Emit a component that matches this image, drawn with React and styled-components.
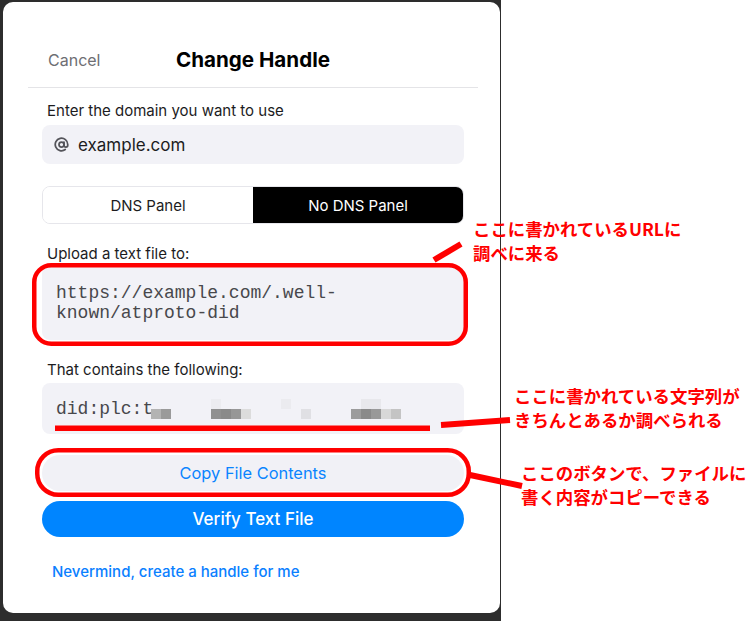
import React from 'react';
import styled, { createGlobalStyle } from 'styled-components';

const GlobalStyle = createGlobalStyle`
  html, body {
    margin: 0;
    padding: 0;
    background: #ffffff;
  }
  body {
    font-family: Inter, "Noto Sans", "Liberation Sans", sans-serif;
    -webkit-font-smoothing: antialiased;
  }
`;

const Page = styled.div`
  position: relative;
  width: 752px;
  height: 621px;
  display: flex;
  background: #ffffff;
  overflow: hidden;
`;

const Backdrop = styled.div`
  width: 501px;
  height: 621px;
  box-sizing: border-box;
  padding: 2px 0 8px 3px;
  background: #2d2d2d;
  overflow: hidden;
`;

const Modal = styled.div`
  width: 497px;
  height: 611px;
  box-sizing: border-box;
  background: #ffffff;
  border-radius: 10px;
  display: flex;
  flex-direction: column;
`;

const Header = styled.div`
  display: grid;
  grid-template-columns: 1fr auto 1fr;
  align-items: center;
  margin: 0 22px 0 25px;
  padding: 44px 0 13px;
  border-bottom: 1px solid #e4e4e7;
`;

const Cancel = styled.span`
  padding-left: 20px;
  font-size: 16px;
  line-height: 28px;
  color: #6e6e73;
`;

const Title = styled.h1`
  margin: 0;
  font-size: 20.6px;
  line-height: 28px;
  font-weight: 700;
  color: #000000;
`;

const Body = styled.div`
  display: flex;
  flex-direction: column;
  padding: 14px 36px 0 39px;
`;

const Label = styled.div`
  margin: ${p => p.$top || 0}px 0 ${p => p.$bottom || 4}px 5px;
  font-size: 15px;
  line-height: 18px;
  color: #1c1c1e;
`;

const InputBox = styled.div`
  height: 39px;
  display: flex;
  align-items: center;
  gap: 9px;
  padding: 0 12px;
  border-radius: 8px;
  background: #f2f2f7;
  color: #54545a;
`;

const InputText = styled.span`
  font-size: 17px;
  color: #1c1c1e;
`;

const Segmented = styled.div`
  margin-top: 22px;
  height: 38px;
  display: grid;
  grid-template-columns: 1fr 1fr;
  border: 1px solid #e6e6eb;
  border-radius: 8px;
  overflow: hidden;
  box-sizing: border-box;
`;

const Segment = styled.div`
  display: flex;
  align-items: center;
  justify-content: center;
  font-size: 15px;
  background: ${p => (p.$active ? '#000000' : '#ffffff')};
  color: ${p => (p.$active ? '#ffffff' : '#1c1c1e')};
`;

const CodeBox = styled.div`
  padding: ${p => (p.$tall ? '17px 14px 17px' : '16px 14px 15px')};
  border-radius: 8px;
  background: #f2f2f7;
  font-family: "Liberation Mono", "Courier New", monospace;
  font-size: 18px;
  line-height: 20px;
  color: #48484c;
  white-space: pre-wrap;
`;

const Mosaic = styled.svg`
  display: inline-block;
  vertical-align: -5px;
  margin-left: -2px;
`;

const PillButton = styled.button`
  height: 36px;
  margin-top: ${p => p.$top}px;
  border: none;
  border-radius: 18px;
  font-family: inherit;
  font-size: ${p => (p.$primary ? '17px' : '16.4px')};
  font-weight: ${p => (p.$primary ? 500 : 400)};
  background: ${p => (p.$primary ? '#0085ff' : '#f1f1f6')};
  color: ${p => (p.$primary ? '#ffffff' : '#0a84ff')};
`;

const TextLink = styled.a`
  margin: 26px 0 0 10px;
  font-size: 15px;
  line-height: 18px;
  font-weight: 500;
  color: #0a80ff;
  text-decoration: none;
`;

const Markup = styled.svg`
  position: absolute;
  left: 0;
  top: 0;
  pointer-events: none;
`;

const Note = styled.div`
  position: absolute;
  left: ${p => p.$x}px;
  top: ${p => p.$y}px;
  font-family: "Noto Sans CJK JP", sans-serif;
  font-size: 17.4px;
  font-weight: 700;
  line-height: 24px;
  color: #ff0000;
  white-space: nowrap;
`;

const AtIcon = () => (
  <svg width="15" height="15" viewBox="0 0 24 24" fill="none" stroke="currentColor" strokeWidth="2.8" strokeLinecap="round" strokeLinejoin="round">
    <circle cx="12" cy="12" r="4" />
    <path d="M16 8v5a3 3 0 0 0 6 0v-1a10 10 0 1 0-4 8" />
  </svg>
);

const cells = [
  [0, 10, '#b3b3b3'], [10, 10, '#9a9a9a'],
  [60, 0, '#ececf0'], [60, 10, '#909090'], [70, 10, '#8a8a8a'], [80, 10, '#979797'], [90, 10, '#dcdcdc'],
  [130, 0, '#ebebef'], [150, 10, '#e0e0e4'],
  [210, 0, '#e8e8ec'], [220, 0, '#e8e8ec'],
  [200, 10, '#9c9c9c'], [210, 10, '#8a8a8a'], [220, 10, '#999999'], [230, 10, '#d8d8d8'], [240, 10, '#c4c4c4'],
];

const Redacted = () => (
  <Mosaic width="252" height="20" viewBox="0 0 252 20">
    {cells.map(([x, y, c]) => (
      <rect key={`${x}-${y}`} x={x} y={y} width="10" height="10" fill={c} />
    ))}
  </Mosaic>
);

export default function App() {
  return (
    <>
      <GlobalStyle />
      <Page>
        <Backdrop>
          <Modal>
            <Header>
              <Cancel>Cancel</Cancel>
              <Title>Change Handle</Title>
              <span />
            </Header>
            <Body>
              <Label $bottom={5}>Enter the domain you want to use</Label>
              <InputBox>
                <AtIcon />
                <InputText>example.com</InputText>
              </InputBox>
              <Segmented>
                <Segment>DNS Panel</Segment>
                <Segment $active>No DNS Panel</Segment>
              </Segmented>
              <Label $top={21} $bottom={3}>Upload a text file to:</Label>
              <CodeBox $tall>https://example.com/.well-known/atproto-did</CodeBox>
              <Label $top={21}>That contains the following:</Label>
              <CodeBox>
                did:plc:t<Redacted />
              </CodeBox>
              <PillButton $top={21}>Copy File Contents</PillButton>
              <PillButton $top={10} $primary>Verify Text File</PillButton>
              <TextLink href="#">Nevermind, create a handle for me</TextLink>
            </Body>
          </Modal>
        </Backdrop>

        <Markup width="752" height="621" viewBox="0 0 752 621">
          <g fill="none" stroke="#ff0000" strokeWidth="4.5">
            <rect x="34.25" y="265.25" width="431.5" height="78.5" rx="17" />
            <rect x="37.25" y="450.25" width="431.5" height="44.5" rx="21" />
          </g>
          <rect x="55" y="425.5" width="375" height="5.5" fill="#ff0000" />
          <g stroke="#ff0000" strokeWidth="6">
            <line x1="434" y1="260" x2="461" y2="244" />
            <line x1="441" y1="425" x2="510" y2="420" />
            <line x1="470" y1="475" x2="522" y2="486" />
          </g>
        </Markup>

        <Note $x={473} $y={217}>
          ここに書かれているURLに
          <br />
          調べに来る
        </Note>
        <Note $x={514} $y={384}>
          ここに書かれている文字列が
          <br />
          きちんとあるか調べられる
        </Note>
        <Note $x={521} $y={461}>
          ここのボタンで、ファイルに
          <br />
          書く内容がコピーできる
        </Note>
      </Page>
    </>
  );
}
